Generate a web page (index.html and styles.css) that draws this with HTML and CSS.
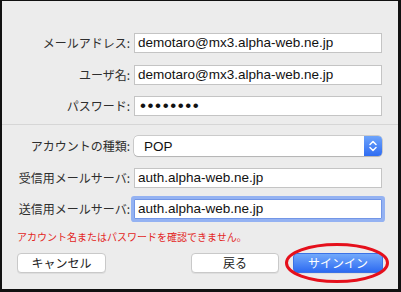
FILE: index.html
```html
<!DOCTYPE html>
<html lang="ja">
<head>
<meta charset="utf-8">
<link rel="stylesheet" href="styles.css">
</head>
<body>
<div class="window">
  <div class="form top">
    <div class="lbl">メールアドレス:</div>
    <div class="field">demotaro@mx3.alpha-web.ne.jp</div>
    <div class="lbl">ユーザ名:</div>
    <div class="field">demotaro@mx3.alpha-web.ne.jp</div>
    <div class="lbl">パスワード:</div>
    <div class="field pw">••••••••</div>
  </div>
  <div class="sep"></div>
  <div class="form bottom">
    <div class="lbl">アカウントの種類:</div>
    <div class="select">
      <span class="sel-text">POP</span>
      <span class="stepper">
        <svg width="18" height="20" viewBox="0 0 18 20"><path d="M6 8.5 L9 5.5 L12 8.5 M6 11.5 L9 14.5 L12 11.5" fill="none" stroke="#fff" stroke-width="1.5" stroke-linecap="round" stroke-linejoin="round"/></svg>
      </span>
    </div>
    <div class="lbl">受信用メールサーバ:</div>
    <div class="field">auth.alpha-web.ne.jp</div>
    <div class="lbl">送信用メールサーバ:</div>
    <div class="field focus">auth.alpha-web.ne.jp</div>
  </div>
  <p class="error">アカウント名またはパスワードを確認できません。</p>
  <div class="buttons">
    <button class="btn cancel">キャンセル</button>
    <button class="btn back">戻る</button>
    <div class="signin-wrap">
      <button class="btn primary">サインイン</button>
      <svg class="mark" width="106" height="42" viewBox="0 0 106 42"><ellipse cx="53" cy="21" rx="50.5" ry="18.5" fill="none" stroke="#e5101c" stroke-width="3"/></svg>
    </div>
  </div>
</div>
</body>
</html>
```
FILE: styles.css
```css
html, body {
  margin: 0;
  padding: 0;
}
body {
  width: 401px;
  height: 292px;
  overflow: hidden;
}
.window {
  box-sizing: border-box;
  width: 401px;
  height: 292px;
  border-style: solid;
  border-color: #111;
  border-width: 1px 3px 3px 2px;
  background: #ececec;
  font-family: "Liberation Sans", "Noto Sans CJK JP", sans-serif;
}
.form {
  display: grid;
  grid-template-columns: 128px 248px;
  column-gap: 4px;
  row-gap: 11.5px;
  align-items: center;
}
.form.top {
  padding-top: 32px;
}
.form.bottom {
  padding-top: 11px;
}
.lbl {
  text-align: right;
  font-family: "Noto Sans CJK JP", sans-serif;
  font-size: 12px;
  line-height: 20px;
  color: #2e2e2e;
}
.field {
  box-sizing: border-box;
  height: 20px;
  background: #fff;
  border: 1px solid #c4c4c4;
  font-size: 13.5px;
  line-height: 18px;
  padding: 0 3px;
  color: #111;
  white-space: nowrap;
  overflow: hidden;
}
.field.pw {
  font-size: 17px;
  letter-spacing: 1.6px;
  padding-left: 5px;
  line-height: 18px;
}
.field.focus {
  border-color: #7396e6;
  border-radius: 1px;
  box-shadow: 0 0 0 3px #94b2f2;
}
.sep {
  height: 1px;
  background: #d6d6d6;
  margin-top: 8px;
}
.select {
  display: flex;
  align-items: center;
  height: 20px;
  background: #fff;
  border-radius: 4px;
  box-shadow: 0 0 0 0.5px rgba(0, 0, 0, 0.28), 0 1px 1px rgba(0, 0, 0, 0.12);
}
.sel-text {
  padding-left: 10px;
  font-size: 13.5px;
  color: #111;
}
.stepper {
  margin-left: auto;
  width: 18px;
  height: 20px;
  border-radius: 0 4px 4px 0;
  background: linear-gradient(#6ea4fb, #2f6cf2);
  display: flex;
}
.error {
  margin: 11px 0 0 15px;
  font-family: "Noto Sans CJK JP", sans-serif;
  font-size: 10px;
  line-height: 14px;
  color: #e3261e;
}
.buttons {
  display: flex;
  align-items: center;
  margin-top: 9px;
  padding: 0 15px;
}
.btn {
  box-sizing: border-box;
  height: 20px;
  margin: 0;
  padding: 0;
  border: 1px solid #c9c9c9;
  border-radius: 4px;
  background: #fff;
  box-shadow: 0 1px 0 rgba(0, 0, 0, 0.06);
  font-family: "Noto Sans CJK JP", sans-serif;
  font-size: 12px;
  line-height: 18px;
  color: #222;
}
.cancel {
  width: 89px;
}
.back {
  width: 88px;
  margin-left: auto;
}
.signin-wrap {
  position: relative;
  margin-left: 14px;
  display: flex;
}
.primary {
  width: 90px;
  border-color: #3b72e6;
  background: linear-gradient(#72a9fb, #2d6af1);
  color: #fff;
}
.mark {
  position: absolute;
  left: -9px;
  top: -11px;
  pointer-events: none;
}
```
